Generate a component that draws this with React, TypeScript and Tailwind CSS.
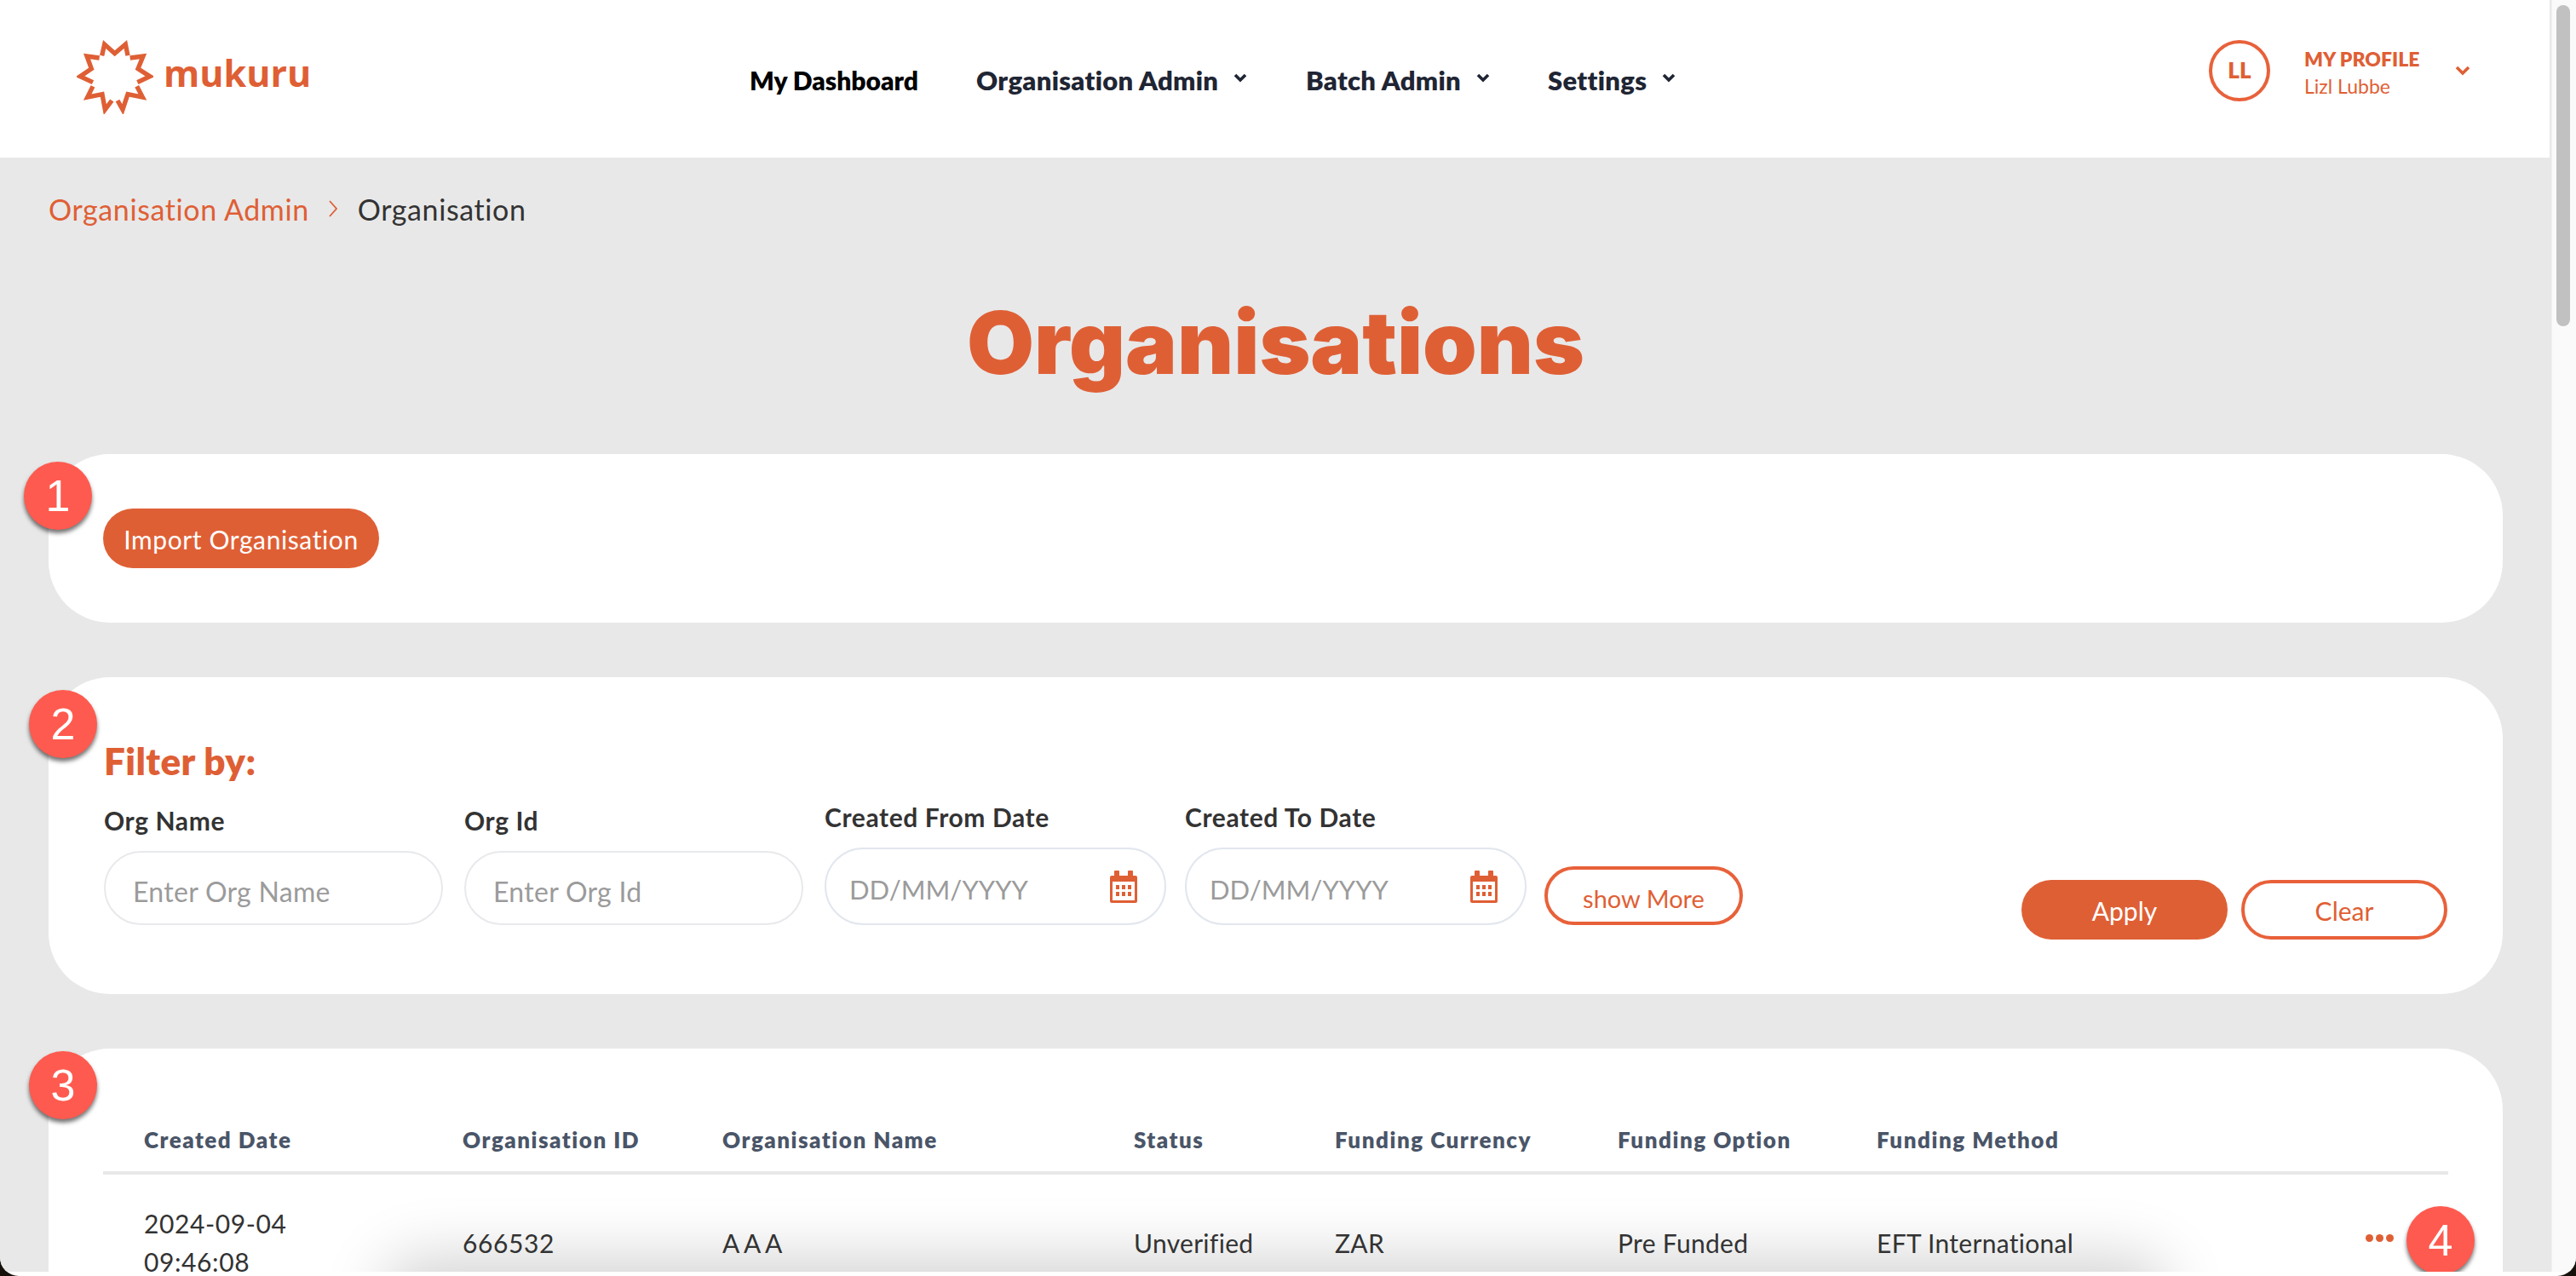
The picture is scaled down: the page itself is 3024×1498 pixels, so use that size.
import React from "react";

function Logo() {
  return (
    <div className="flex items-center">
      <svg width="90" height="88" viewBox="88 74 270 264" className="shrink-0">
        <g fill="none" stroke="#df5f35" strokeWidth="16" strokeLinejoin="miter" strokeMiterlimit="6">
          <polyline points="177,132 186,92 222,124 260,92 268,132" />
          <polyline points="276,140 322,134 304,178 346,205 302,226" />
          <polyline points="300,240 320,278 268,268 250,322 232,290" />
          <polyline points="212,290 188,322 178,268 126,278 145,240" />
          <polyline points="145,226 100,205 140,178 124,134 168,140" />
        </g>
      </svg>
      <span className="ml-[12px] text-[43px] leading-none font-bold text-[#df5f35] font-['Open_Sans',sans-serif] -mt-[8px]">mukuru</span>
    </div>
  );
}

function NavChevron({ color = "#1f2533" }: { color?: string }) {
  return (
    <svg width="20" height="14" viewBox="0 0 20 14" className="shrink-0 -mt-[4px]">
      <polyline points="4,3 10,9 16,3" fill="none" stroke={color} strokeWidth="3.6" />
    </svg>
  );
}

function CalendarIcon() {
  return (
    <svg width="32" height="38" viewBox="0 0 32 38" className="shrink-0">
      <path fill="#df5f35" d="M6 0h4a1 1 0 0 1 1 1v5h10V1a1 1 0 0 1 1-1h4a1 1 0 0 1 1 1v5h3a2 2 0 0 1 2 2v28a2 2 0 0 1-2 2H2a2 2 0 0 1-2-2V8a2 2 0 0 1 2-2h3V1a1 1 0 0 1 1-1z" />
      <rect x="3" y="13" width="26" height="22" fill="#fff" />
      <g fill="#df5f35">
        <rect x="7" y="17" width="4" height="5" />
        <rect x="14" y="17" width="4" height="5" />
        <rect x="21" y="17" width="4" height="5" />
        <rect x="7" y="25" width="4" height="5" />
        <rect x="14" y="25" width="4" height="5" />
        <rect x="21" y="25" width="4" height="5" />
      </g>
    </svg>
  );
}

function Badge({ n, className }: { n: number; className: string }) {
  return (
    <div className={"absolute w-[80px] h-[80px] rounded-full bg-[#ff5a4f] shadow-[0_4px_5px_rgba(0,0,0,0.55)] flex items-center justify-center text-white text-[52px] leading-none font-['Liberation_Sans',sans-serif] z-10 " + className}>
      {n}
    </div>
  );
}

function TextField({ label, placeholder }: { label: string; placeholder: string }) {
  return (
    <div className="w-[398px] flex flex-col">
      <label className="text-[30px] leading-[34px] font-bold tracking-[0.6px] text-[#333]">{label}</label>
      <div className="mt-[19px] h-[87px] rounded-[44px] border-2 border-[#e8e9ec] flex items-center pl-[32px] pt-[8px] text-[32px] tracking-[0.3px] text-[#9b9b9b]">
        {placeholder}
      </div>
    </div>
  );
}

function DateField({ label }: { label: string }) {
  return (
    <div className="w-[401px] flex flex-col">
      <label className="text-[30px] leading-[34px] font-bold tracking-[0.6px] text-[#333]">{label}</label>
      <div className="mt-[19px] h-[91px] rounded-[46px] border-2 border-[#e2e6ee] flex items-center justify-between pl-[27px] pr-[32px] text-[31px] text-[#9b9b9b]">
        <span className="pt-[8px]">DD/MM/YYYY</span>
        <CalendarIcon />
      </div>
    </div>
  );
}

const headers = ["Created Date", "Organisation ID", "Organisation Name", "Status", "Funding Currency", "Funding Option", "Funding Method"];

export default function App() {
  return (
    <div className="w-[3024px] h-[1498px] bg-[#16100a]">
      <div className="w-[3024px] h-[1498px] overflow-hidden flex bg-white rounded-b-[22px] font-['Lato',sans-serif]">
        <main className="w-[2995px] h-[1493px] bg-[#e8e8e8] flex flex-col shrink-0 overflow-hidden">
          <header className="h-[185px] w-[2993px] shrink-0 bg-white flex items-center">
            <div className="w-[880px] pl-[90px] shrink-0 -mt-[6px]">
              <Logo />
            </div>
            <nav className="flex items-center text-[31px] font-extrabold tracking-[0.3px] text-[#1f2533] mt-[3px]">
              <a className="text-black text-[30px] tracking-[0px] w-[266px]">My Dashboard</a>
              <a className="w-[387px] flex items-center gap-[16px]">Organisation Admin <NavChevron /></a>
              <a className="w-[284px] flex items-center gap-[16px]">Batch Admin <NavChevron /></a>
              <a className="flex items-center gap-[16px]">Settings <NavChevron /></a>
            </nav>
            <div className="ml-auto flex items-center pr-[93px] -mt-[20px]">
              <div className="w-[72px] h-[72px] rounded-full border-4 border-[#e8613a] flex items-center justify-center text-[26px] font-extrabold text-[#df5f35]">LL</div>
              <div className="ml-[40px] w-[177px] flex flex-col text-[#df5f35] pt-[4px]">
                <span className="text-[23px] leading-[32px] font-extrabold">MY PROFILE</span>
                <span className="text-[23px] leading-[32px]">Lizl Lubbe</span>
              </div>
              <svg width="18" height="12" viewBox="0 0 18 12" className="shrink-0">
                <polyline points="2,2 9,9 16,2" fill="none" stroke="#df5f35" strokeWidth="3.6" />
              </svg>
            </div>
          </header>

          <div className="h-[348px] shrink-0 flex flex-col px-[57px]">
            <nav className="flex items-center h-[120px] text-[34px] tracking-[0.6px]">
              <span className="text-[#df5f35]">Organisation Admin</span>
              <svg width="14" height="24" viewBox="0 0 14 24" className="ml-[21px] mr-[22px]">
                <polyline points="3,3 11,12 3,21" fill="none" stroke="#df5f35" strokeWidth="1.8" />
              </svg>
              <span className="text-[#333]">Organisation</span>
            </nav>
            <h1 className="text-center text-[102px] leading-[120px] font-black text-[#df5f35] mt-[37px] font-['Inter',sans-serif]">Organisations</h1>
          </div>

          <section className="relative mx-[57px] h-[198px] shrink-0 bg-white rounded-[72px] pt-[64px] pl-[64px]">
            <Badge n={1} className="-left-[29px] top-[9px]" />
            <button className="w-[324px] h-[70px] rounded-[35px] bg-[#df5f35] text-white text-[30px] tracking-[0.6px] pt-[2px]">Import Organisation</button>
          </section>

          <section className="relative mx-[57px] mt-[64px] h-[372px] shrink-0 bg-white rounded-[72px] px-[65px]">
            <Badge n={2} className="-left-[23px] top-[15px]" />
            <h2 className="text-[44px] leading-[48px] font-extrabold tracking-[0.4px] text-[#df5f35] pt-[74px] h-[124px]">Filter by:</h2>
            <div className="flex items-end absolute left-[65px] right-[65px] bottom-[81px]">
              <div className="flex items-end gap-[25px]">
                <TextField label="Org Name" placeholder="Enter Org Name" />
                <TextField label="Org Id" placeholder="Enter Org Id" />
                <div className="flex gap-[22px]">
                  <DateField label="Created From Date" />
                  <DateField label="Created To Date" />
                </div>
              </div>
              <button className="ml-[21px] w-[233px] h-[69px] rounded-[35px] border-4 border-[#e8613a] text-[#df5f35] text-[29px] pt-[6px]">show More</button>
              <div className="ml-auto flex gap-[16px] -mb-[17px]">
                <button className="w-[242px] h-[70px] rounded-[35px] bg-[#df5f35] text-white text-[30px] pt-[3px]">Apply</button>
                <button className="w-[242px] h-[70px] rounded-[35px] border-4 border-[#e8613a] text-[#df5f35] text-[30px] pt-[3px]">Clear</button>
              </div>
            </div>
          </section>

          <section className="relative mx-[57px] mt-[64px] flex-1 bg-white rounded-t-[72px] px-[64px] pt-[84px]">
            <Badge n={3} className="-left-[23px] top-[3px]" />
            <div className="grid grid-cols-[422px_305px_483px_236px_332px_304px_1fr] h-[64px] border-b-4 border-[#e8e8e8] text-[26px] leading-[46px] font-extrabold tracking-[1.5px] text-[#4a5568]">
              {headers.map((h, i) => (
                <div key={i} className={i === 0 ? "pl-[48px]" : ""}>{h}</div>
              ))}
            </div>
            <div className="absolute left-[420px] right-[420px] -bottom-[40px] h-[40px] rounded-full shadow-[0_0_70px_30px_rgba(0,0,0,0.17)] pointer-events-none" />
            <div className="relative grid grid-cols-[422px_305px_483px_236px_332px_304px_1fr] items-center text-[30px] tracking-[0.6px] leading-[45px] text-[#333] pt-[35px]">
              <div className="pl-[48px]">2024-09-04<br />09:46:08</div>
              <div>666532</div>
              <div className="tracking-[-0.5px]">A A A</div>
              <div className="tracking-[0.3px]">Unverified</div>
              <div className="tracking-[0.3px]">ZAR</div>
              <div className="tracking-[0.3px]">Pre Funded</div>
              <div className="flex items-center justify-between pr-[64px] tracking-[0.3px]">
                <span>EFT International</span>
                <span className="flex gap-[3px] -mt-[12px]">
                  <span className="w-[9px] h-[9px] rounded-full bg-[#df5f35]" />
                  <span className="w-[9px] h-[9px] rounded-full bg-[#df5f35]" />
                  <span className="w-[9px] h-[9px] rounded-full bg-[#df5f35]" />
                </span>
              </div>
            </div>
            <Badge n={4} className="right-[33px] top-[185px]" />
          </section>
        </main>

        <aside className="w-[29px] h-[1493px] bg-[#fafafa] border-l border-[#f0f0f0] pl-[5px] pt-[6px] shrink-0">
          <div className="w-[16px] h-[377px] rounded-full bg-[#c1c1c1]" />
        </aside>
      </div>
    </div>
  );
}
